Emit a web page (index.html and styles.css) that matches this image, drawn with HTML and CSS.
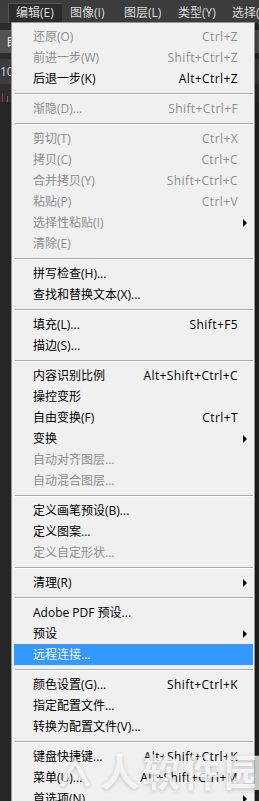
FILE: index.html
```html
<!DOCTYPE html>
<html lang="zh-CN">
<head>
    <meta charset="UTF-8">
    <meta name="viewport" content="width=device-width, initial-scale=1.0">
    <title>编辑菜单</title>
    <link rel="stylesheet" href="styles.css">
</head>
<body>
    <div class="app">
        <div class="menubar">
            <span class="mb-lead">帮助(H)</span>
            <span class="mb-item active">编辑(E)</span>
            <span class="mb-item">图像(I)</span>
            <span class="mb-item">图层(L)</span>
            <span class="mb-item">类型(Y)</span>
            <span class="mb-item">选择(S)</span>
        </div>
        <div class="strip"></div>
        <div class="options"><span>自动选择</span></div>
        <div class="strip thin"></div>
        <div class="tabs"><span>100%</span></div>
        <div class="ruler">
            <i class="tick red"></i><i class="tick"></i><i class="tick short"></i>
        </div>
        <div class="workspace"></div>
    </div>

    <!-- 下拉菜单 -->
    <ul class="dropdown">
        <li class="item off">还原(O)<span class="key">Ctrl+Z</span></li>
        <li class="item off">前进一步(W)<span class="key">Shift+Ctrl+Z</span></li>
        <li class="item">后退一步(K)<span class="key">Alt+Ctrl+Z</span></li>
        <li class="sep"></li>
        <li class="item off">渐隐(D)...<span class="key">Shift+Ctrl+F</span></li>
        <li class="sep"></li>
        <li class="item off">剪切(T)<span class="key">Ctrl+X</span></li>
        <li class="item off">拷贝(C)<span class="key">Ctrl+C</span></li>
        <li class="item off">合并拷贝(Y)<span class="key">Shift+Ctrl+C</span></li>
        <li class="item off">粘贴(P)<span class="key">Ctrl+V</span></li>
        <li class="item off sub">选择性粘贴(I)</li>
        <li class="item off">清除(E)</li>
        <li class="sep"></li>
        <li class="item">拼写检查(H)...</li>
        <li class="item">查找和替换文本(X)...</li>
        <li class="sep"></li>
        <li class="item">填充(L)...<span class="key">Shift+F5</span></li>
        <li class="item">描边(S)...</li>
        <li class="sep"></li>
        <li class="item">内容识别比例<span class="key">Alt+Shift+Ctrl+C</span></li>
        <li class="item">操控变形</li>
        <li class="item">自由变换(F)<span class="key">Ctrl+T</span></li>
        <li class="item sub">变换</li>
        <li class="item off">自动对齐图层...</li>
        <li class="item off">自动混合图层...</li>
        <li class="sep"></li>
        <li class="item">定义画笔预设(B)...</li>
        <li class="item">定义图案...</li>
        <li class="item off">定义自定形状...</li>
        <li class="sep"></li>
        <li class="item sub">清理(R)</li>
        <li class="sep"></li>
        <li class="item">Adobe PDF 预设...</li>
        <li class="item sub">预设</li>
        <li class="item hover">远程连接...</li>
        <li class="sep"></li>
        <li class="item">颜色设置(G)...<span class="key">Shift+Ctrl+K</span></li>
        <li class="item">指定配置文件...</li>
        <li class="item">转换为配置文件(V)...</li>
        <li class="sep"></li>
        <li class="item">键盘快捷键...<span class="key">Alt+Shift+Ctrl+K</span></li>
        <li class="item">菜单(U)...<span class="key">Alt+Shift+Ctrl+M</span></li>
        <li class="item sub">首选项(N)</li>
    </ul>

    <div class="watermark"><span class="mark">∧</span>人软件园</div>
</body>
</html>
```

FILE: styles.css
```css
body {
    margin: 0;
    padding: 0;
    width: 259px;
    height: 801px;
    overflow: hidden;
    background-color: #262626;
    font-family: "Open Sans", "Noto Sans CJK SC", sans-serif;
    font-size: 12px;
}
.app {
    display: flex;
    flex-direction: column;
    height: 801px;
}
.menubar {
    display: flex;
    height: 23px;
    background: #3d3d3d;
    color: #dcdcdc;
    white-space: nowrap;
    overflow: hidden;
}
.mb-lead {
    width: 11px;
    padding-right: 8px;
    box-sizing: border-box;
    display: flex;
    justify-content: flex-end;
    overflow: hidden;
    line-height: 22px;
    margin-top: 2px;
}
.mb-item {
    padding: 0 8px;
    width: 54px;
    box-sizing: border-box;
    line-height: 20px;
    margin-top: 3px;
    flex-shrink: 0;
}
.mb-item.active {
    background: #2c2c2c;
    box-shadow: inset 1px 1px 0 #555;
}
.strip {
    height: 7px;
    background: #2b2b2b;
}
.strip.thin {
    height: 6px;
}
.options {
    height: 23px;
    background: #535353;
    color: #f2f2f2;
    padding-left: 6px;
    line-height: 23px;
    white-space: nowrap;
    overflow: hidden;
}
.tabs {
    height: 25px;
    background: #3c3c3c;
    color: #cfd8e8;
    line-height: 25px;
    white-space: nowrap;
    overflow: hidden;
}
.ruler {
    height: 18px;
    background: #2e2e2e;
    display: flex;
    align-items: flex-end;
    gap: 4px;
    padding-left: 2px;
}
.tick {
    width: 1px;
    height: 6px;
    background: #6a6a6a;
}
.tick.red {
    background: #b03030;
    height: 9px;
}
.tick.short {
    height: 3px;
}
.workspace {
    flex: 1;
    background: #262626;
}

/* meniul */
.dropdown {
    position: absolute;
    top: 22px;
    left: 11px;
    width: 244px;
    box-sizing: border-box;
    margin: 0;
    padding: 3px 1px 0 2px;
    list-style: none;
    background: #f0f0f0;
    border: 1px solid #979797;
    box-shadow: 2px 2px 3px rgba(0, 0, 0, 0.4);
}
.item {
    position: relative;
    display: flex;
    justify-content: space-between;
    height: 21px;
    line-height: 21px;
    padding: 0 15px 0 19px;
    color: #000;
    white-space: nowrap;
}
.item.off {
    color: #8e8e8e;
}
.item.hover {
    background: #3399ff;
    color: #f4f6fa;
}
.key {
    letter-spacing: 0.4px;
}
.sub::after {
    content: "";
    position: absolute;
    right: 6px;
    top: 7px;
    border-left: 4px solid #000;
    border-top: 4px solid transparent;
    border-bottom: 4px solid transparent;
}
.sep {
    height: 9px;
    box-sizing: border-box;
    padding-top: 4px;
    margin-left: 1px;
}
.sep::before {
    content: "";
    display: block;
    height: 1px;
    background: #a9a9a9;
    border-bottom: 1px solid #fff;
}
.watermark {
    position: absolute;
    left: 56px;
    top: 742px;
    font-size: 38px;
    font-weight: bold;
    letter-spacing: 3px;
    color: rgba(255, 255, 255, 0.75);
    text-shadow: 0 1px 4px rgba(0, 0, 0, 0.2);
    white-space: nowrap;
    pointer-events: none;
}
.mark {
    margin-right: 4px;
}
```
